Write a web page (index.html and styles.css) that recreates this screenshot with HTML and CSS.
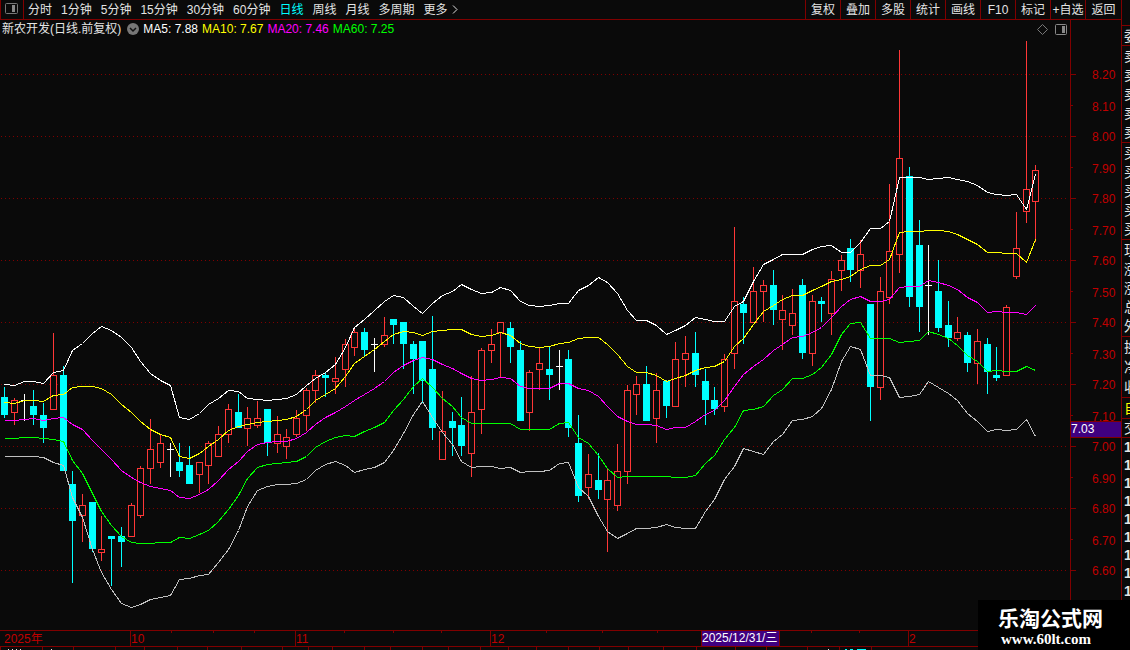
FILE: index.html
```html
<!DOCTYPE html>
<html lang="zh-CN">
<head>
    <meta charset="UTF-8">
    <meta name="viewport" content="width=device-width, initial-scale=1.0">
    <title>新农开发 日线</title>
    <link rel="stylesheet" href="styles.css">
</head>
<body>

<div class="terminal">
    <main class="main">

        <!-- Period toolbar -->
        <header class="toolbar">
            <button class="panel-toggle" aria-label="左侧栏">
                <svg width="13" height="11" viewBox="0 0 13 11">
                    <rect x="0.5" y="0.5" width="12" height="10" rx="1" fill="none" stroke="#777"/>
                    <rect x="7" y="2" width="3" height="7" fill="#888"/>
                </svg>
            </button>
            <nav class="periods">
                <button>分时</button>
                <button>1分钟</button>
                <button>5分钟</button>
                <button>15分钟</button>
                <button>30分钟</button>
                <button>60分钟</button>
                <button class="active">日线</button>
                <button>周线</button>
                <button>月线</button>
                <button>多周期</button>
                <button class="more">更多
                    <svg width="6" height="9" viewBox="0 0 6 9"><path d="M1 0.5 L5 4.5 L1 8.5" fill="none" stroke="#ddd"/></svg>
                </button>
            </nav>
            <div class="tools">
                <button>复权</button>
                <button>叠加</button>
                <button>多股</button>
                <button>统计</button>
                <button>画线</button>
                <button>F10</button>
                <button>标记</button>
                <button>+自选</button>
                <button>返回</button>
            </div>
        </header>

        <!-- K line chart -->
        <section class="chart">
            <svg id="kline" class="kline"></svg>
            <div class="legend">
                <span class="name">新农开发(日线.前复权)</span>
                <svg width="12" height="12" viewBox="0 0 12 12">
                    <circle cx="6" cy="6" r="6" fill="#777"/>
                    <path d="M3 5 L6 8 L9 5" fill="none" stroke="#111" stroke-width="1.5"/>
                </svg>
                <span class="ma5">MA5: 7.88</span>
                <span class="ma10">MA10: 7.67</span>
                <span class="ma20">MA20: 7.46</span>
                <span class="ma60">MA60: 7.25</span>
            </div>
            <div class="chart-icons">
                <svg width="11" height="11" viewBox="0 0 11 11"><path d="M5.5 0.5 L10.5 5.5 L5.5 10.5 L0.5 5.5 Z" fill="none" stroke="#777"/></svg>
                <svg width="12" height="11" viewBox="0 0 12 11">
                    <rect x="0.5" y="0.5" width="11" height="10" rx="1" fill="none" stroke="#888"/>
                    <rect x="7" y="2" width="3" height="7" fill="#888"/>
                </svg>
            </div>
        </section>
    </main>

    <!-- Quote panel, cut by the window edge -->
    <aside class="quote">
        <div class="group head"></div>
        <div class="group ratio"><span>委</span></div>
        <div class="group five"><span>卖</span><span>卖</span><span>卖</span><span>卖</span><span>卖</span></div>
        <div class="group five"><span>买</span><span>买</span><span>买</span><span>买</span><span>买</span></div>
        <div class="group five"><span>现</span><span>涨</span><span>涨</span><span>总</span><span>外</span></div>
        <div class="group three"><span>换</span><span>净</span><span>收</span></div>
        <div class="group tab"><span>自</span></div>
        <div class="group trade"><span>交</span></div>
        <div class="ticks">
            <span>1</span><span>1</span><span>1</span><span>1</span><span>1</span><span>1</span><span>1</span><span>1</span><span>1</span>
        </div>
    </aside>
</div>

<div class="watermark">
    <strong>乐淘公式网</strong>
    <a href="#">www.60lt.com</a>
</div>

<script src="chart.js"></script>
</body>
</html>
```
FILE: styles.css
```css
* { box-sizing: border-box; }
body { margin: 0; background-color: #0a0a0a; color: #e4e4e4; font-family: "Liberation Sans", "Noto Sans CJK SC", sans-serif; font-size: 12px; line-height: 16px; overflow: hidden; }
button { margin: 0; padding: 0; border: none; background: none; color: inherit; font: inherit; white-space: nowrap; cursor: pointer; }
svg { display: block; }

.terminal { display: grid; grid-template-columns: minmax(0, 1fr) 9px; height: 100vh; }
.main { display: flex; flex-direction: column; min-width: 0; }

/* toolbar */
.toolbar { display: flex; height: 20px; border-bottom: 1px solid #800000; border-left: 1px solid #800000; }
.panel-toggle { display: flex; align-items: center; justify-content: center; width: 23px; padding-right: 2px; padding-bottom: 2px; border-right: 1px solid #800000; }
.periods { display: flex; align-items: center; gap: 9px; padding-left: 4px; }
.periods .active { color: #00ffff; }
.more { display: flex; align-items: center; gap: 4px; }
.tools { display: flex; margin-left: auto; }
.tools button { width: 35px; border-left: 1px solid #800000; }
.tools button:last-child { width: 36px; }

/* chart */
.chart { position: relative; flex: 1; min-height: 0; }
.kline { position: absolute; width: 100%; height: 100%; }
.legend { position: absolute; top: 1px; left: 2px; display: flex; align-items: center; gap: 4px; white-space: nowrap; }
.name { margin-right: 2px; }
.ma5 { color: #ffffff; }
.ma10 { color: #ffff00; }
.ma20 { color: #ff00ff; }
.ma60 { color: #00ff00; }
.chart-icons { position: absolute; top: 4px; right: 54px; display: flex; gap: 7px; }

.axis { stroke: #800000; fill: none; shape-rendering: crispEdges; }
.grid { stroke: #800000; stroke-dasharray: 1 3; shape-rendering: crispEdges; }
.label { fill: #c00000; }
.tag { fill: #400080; stroke: #800000; shape-rendering: crispEdges; }
.tag-text { fill: #ffffff; }
.candle { shape-rendering: crispEdges; }
.up { stroke: #ff3737; fill: #0a0a0a; }
.down { stroke: #00ffff; fill: #00ffff; }
.flat { stroke: #ffffff; fill: none; }
.band { fill: none; stroke-width: 1; shape-rendering: crispEdges; }
.band-upper { stroke: #ffffff; }
.band-high { stroke: #ffff00; }
.band-mid { stroke: #ff00ff; }
.band-low { stroke: #00ff00; }
.band-lower { stroke: #c0c0c0; }
.mark { fill: #e4e4e4; }
.mark-on { fill: #00ffff; }

/* quote panel */
.quote { display: flex; flex-direction: column; border-left: 1px solid #800000; overflow: hidden; font-size: 14px; line-height: 18px; }
.group { display: flex; flex: none; flex-direction: column; justify-content: space-around; border-bottom: 1px solid #800000; }
.quote span { padding-left: 2px; white-space: nowrap; }
.head { height: 26px; }
.ratio { height: 20px; }
.five { height: 97px; }
.three { height: 61px; }
.tab { height: 21px; color: #ffff00; }
.trade { height: 19px; }
.ticks { display: flex; flex-direction: column; font-weight: bold; }

/* watermark */
.watermark { position: fixed; right: 0; bottom: 0; display: flex; flex-direction: column; gap: 2px; width: 152px; height: 50px; padding: 5px 0 0 20px; background-color: #000; color: #fff; }
.watermark strong { font-family: "Noto Sans CJK SC", sans-serif; font-size: 21px; line-height: 24px; white-space: nowrap; }
.watermark a { padding-left: 3px; color: inherit; font-family: "Liberation Serif", serif; font-size: 15px; font-weight: bold; line-height: 16px; text-decoration: none; }
```
FILE: chart.js
```js
// kind, high, body top, body bottom, low
const candles = [
    ['d',387,397,415,418], ['u',398,400,413,425], ['f',394,400,401,421], ['d',390,406,415,425], ['d',403,415,428,443],
    ['u',333,375,410,410], ['d',366,375,471,471], ['d',471,484,521,583], ['u',494,505,516,542], ['d',502,502,549,552],
    ['u',516,549,553,561], ['d',536,536,539,586], ['d',527,536,542,567], ['u',503,505,537,537], ['u',466,468,516,518],
    ['u',419,449,469,484], ['u',434,443,463,468], ['f',443,449,450,477], ['d',443,462,471,477], ['d',446,465,484,484],
    ['u',462,462,475,493], ['u',441,443,466,484], ['u',426,434,457,457], ['u',404,409,435,443], ['d',394,412,428,428],
    ['u',407,418,429,446], ['u',401,418,426,428], ['d',409,409,443,456], ['u',416,434,444,453], ['u',429,437,447,459],
    ['u',410,418,435,437], ['u',388,390,416,431], ['u',370,375,391,403], ['d',372,375,378,397], ['u',357,378,382,394],
    ['u',339,344,370,387], ['u',329,332,348,356], ['d',328,332,350,356], ['f',338,344,345,372], ['u',317,335,345,347],
    ['d',319,319,325,344], ['d',322,322,344,369], ['d',341,344,359,394], ['d',341,341,381,403], ['d',316,369,428,440],
    ['u',391,431,460,460], ['d',412,421,428,456], ['d',397,425,446,456], ['u',376,412,454,477], ['u',348,350,410,434],
    ['u',329,344,351,363], ['u',322,322,333,378], ['d',322,328,347,363], ['d',341,350,421,421], ['u',370,372,413,431],
    ['u',347,363,370,390], ['d',346,369,375,400], ['f',350,366,367,390], ['d',350,359,428,437], ['d',415,443,496,502],
    ['u',454,474,488,499], ['d',453,480,490,499], ['u',469,480,500,552], ['u',444,471,506,511], ['u',385,390,472,484],
    ['u',376,384,395,415], ['d',366,384,421,421], ['u',373,390,419,443], ['d',380,381,406,418], ['u',342,359,407,407],
    ['u',336,353,360,387], ['d',332,353,375,387], ['d',369,381,400,425], ['d',387,400,409,415], ['u',354,359,407,412],
    ['u',227,301,354,369], ['d',297,304,313,344], ['u',267,291,323,323], ['u',280,285,292,322], ['d',270,285,310,325],
    ['u',295,310,320,350], ['u',289,313,326,335], ['d',279,285,353,359], ['u',295,301,354,366], ['d',297,301,304,322],
    ['u',271,279,314,335], ['u',255,260,271,291], ['d',239,248,270,282], ['u',240,254,271,288], ['d',304,304,387,421],
    ['u',277,291,388,400], ['u',184,251,298,304], ['u',50,158,255,273], ['d',167,176,297,307], ['d',220,245,307,332],
    ['f',245,285,286,335], ['d',260,291,328,332], ['d',301,325,338,347], ['u',317,332,339,341], ['d',332,335,363,372],
    ['u',329,341,364,384], ['d',338,344,372,394], ['d',347,375,378,381], ['u',305,307,376,376], ['u',212,248,277,279],
    ['u',41,189,212,223], ['u',165,170,202,242]
];

const bands = {
    lower: [456,456,456,456,457,462,465,497,517,549,572,589,603,607,604,599,597,595,579,578,575,574,562,549,530,506,490,486,484,484,483,479,470,464,461,465,472,469,467,462,450,433,414,401,417,432,444,461,467,466,466,468,467,472,471,471,470,463,462,487,496,516,531,538,533,528,528,527,524,527,528,528,511,499,479,466,448,451,454,441,434,420,419,416,408,389,361,346,349,375,375,377,397,396,394,381,387,393,400,413,421,431,429,430,429,419,436],
    low: [438,438,437,437,438,439,441,460,473,493,511,525,536,542,543,543,542,542,537,538,534,530,521,509,495,478,467,464,463,462,461,456,447,441,437,435,436,431,427,422,410,399,386,378,387,398,406,417,423,423,423,423,423,429,429,429,429,423,422,437,443,455,468,477,476,476,476,476,476,477,477,475,463,455,439,427,410,409,406,395,389,378,378,374,367,354,334,323,322,338,338,338,342,341,340,331,334,338,345,355,361,371,370,371,371,366,370],
    mid: [420,420,419,418,420,418,417,424,429,440,449,459,470,477,482,486,488,490,497,498,494,489,480,469,461,451,444,442,441,441,438,432,424,417,412,406,400,394,388,381,372,365,360,357,359,364,368,373,378,380,379,377,378,386,388,388,388,383,383,388,390,396,406,416,421,424,424,425,429,427,427,421,414,410,400,386,374,366,359,350,344,337,336,332,327,317,306,299,296,301,301,299,287,286,286,280,282,285,289,297,302,312,311,312,312,314,305],
    high: [402,403,400,400,401,395,394,387,386,386,388,394,404,412,421,429,434,437,456,458,453,446,439,430,426,424,422,421,420,419,416,409,400,394,388,376,363,356,349,341,334,331,332,335,331,330,329,329,334,336,335,332,335,343,346,347,346,343,342,338,337,337,344,354,366,372,372,375,381,378,375,370,367,366,361,346,338,324,311,305,299,295,295,290,286,281,279,276,269,265,265,259,232,231,231,230,230,231,234,239,244,252,252,253,253,262,239],
    upper: [384,385,381,381,383,372,370,350,343,333,326,330,337,347,361,373,380,385,417,419,413,404,398,390,391,398,399,400,399,398,394,385,378,372,364,347,327,319,310,301,295,297,306,313,303,295,291,284,289,293,292,287,290,301,305,306,305,303,303,290,285,277,282,293,310,320,320,325,334,330,325,317,319,321,321,306,301,281,264,259,254,254,254,249,246,245,252,252,242,228,228,221,177,177,177,179,178,177,179,181,185,192,194,195,194,209,174]
};

const months = [[130, '10'], [295, '11'], [490, '12'], [908, '2']];
const weekTicks = [171, 213, 254, 344, 393, 441, 546, 602, 657, 811, 859];
const tabTicks = [0, 42, 73, 115, 144, 177, 207, 241, 282, 308, 332, 364, 390, 422, 448, 480, 508, 536, 568, 599, 628, 663, 696, 735, 766, 807, 839, 871];

// the data above is on a 1121 x 630 canvas that starts below the toolbar
const TOP = 20, BASE_W = 1121, BASE_H = 630, AXIS_W = 51;
const svg = document.getElementById('kline');

function add(tag, cls, attrs, text) {
    const el = document.createElementNS('http://www.w3.org/2000/svg', tag);
    el.setAttribute('class', cls);
    for (const k in attrs) el.setAttribute(k, attrs[k]);
    if (text) el.textContent = text;
    svg.appendChild(el);
}

function draw() {
    svg.innerHTML = '';
    const w = svg.clientWidth, h = svg.clientHeight;
    const right = w - AXIS_W;
    const kx = right / (BASE_W - AXIS_W), ky = h / BASE_H;
    const X = x => Math.floor(x * kx);
    const Y = y => Math.round((y - TOP) * ky);
    const cx = i => X(4.7 + 9.727 * i);
    const bottom = Y(630);

    // price axis
    for (let i = 0; i <= 16; i++) {
        const y = Y(74 + i * 31) + 0.5;
        const major = i % 2 === 0;
        if (major) add('path', 'grid', { d: `M1 ${y}H${right - 3}` });
        add('path', 'axis', { d: `M${right + 1} ${y}h${major ? 5 : 2}` });
        add('text', 'label', { x: right + 22, y: y + (major ? 4.5 : 5.5) }, (8.2 - i / 10).toFixed(2));
    }
    add('path', 'axis', { d: `M${right + 0.5} 0V${bottom}` });

    candles.forEach(([kind, high, top, low, end], i) => {
        const x = cx(i), t = Y(top), b = Y(low);
        const cls = 'candle ' + { u: 'up', d: 'down', f: 'flat' }[kind];
        if (kind === 'f') {
            add('path', cls, { d: `M${x + 0.5} ${Y(high)}V${Y(end)}M${x - 3} ${t + 0.5}h7` });
            return;
        }
        add('path', cls, { d: `M${x + 0.5} ${Y(high)}V${t}M${x + 0.5} ${b}V${Y(end)}` });
        add('rect', cls, { x: x - 2.5, y: t + 0.5, width: 6, height: Math.max(b - t - 1, 1) });
    });

    for (const name in bands) {
        const pts = bands[name].map((y, i) => `${cx(i) + 0.5},${Y(y) + 0.5}`);
        add('polyline', 'band band-' + name, { points: pts.join(' ') });
    }

    // cursor price
    const p = Y(421);
    add('rect', 'tag', { x: right + 0.5, y: p + 0.5, width: AXIS_W, height: 16 });
    add('text', 'tag-text', { x: right + 1, y: p + 12 }, '7.03');

    // date axis
    add('path', 'axis', { d: `M0 ${bottom + 0.5}H${w}M0 ${bottom + 16.5}H${w}` });
    add('text', 'label', { x: 4, y: bottom + 13 }, '2025年');
    months.forEach(([x, text]) => {
        add('path', 'axis', { d: `M${X(x) + 0.5} ${bottom}v16` });
        add('text', 'label', { x: X(x) + 1, y: bottom + 13 }, text);
    });
    weekTicks.forEach(x => add('path', 'axis', { d: `M${X(x) + 0.5} ${bottom + 1}v2` }));
    add('rect', 'tag', { x: X(701) + 0.5, y: bottom + 0.5, width: 78, height: 16 });
    add('text', 'tag-text', { x: X(701) + 1, y: bottom + 12 }, '2025/12/31/三');

    // top edge of the indicator tabs
    tabTicks.forEach(x => add('path', 'axis', { d: `M${X(x) + 0.5} ${bottom + 17}v3` }));
    [8, 12, 16, 20, 51, 828].forEach(x => add('rect', 'mark', { x: X(x), y: bottom + 19, width: 1, height: 1 }));
    [[845, 2], [850, 3], [857, 9]].forEach(([x, n]) => add('rect', 'mark-on', { x: X(x), y: bottom + 19, width: n, height: 1 }));
}

draw();
window.addEventListener('resize', draw);
```
